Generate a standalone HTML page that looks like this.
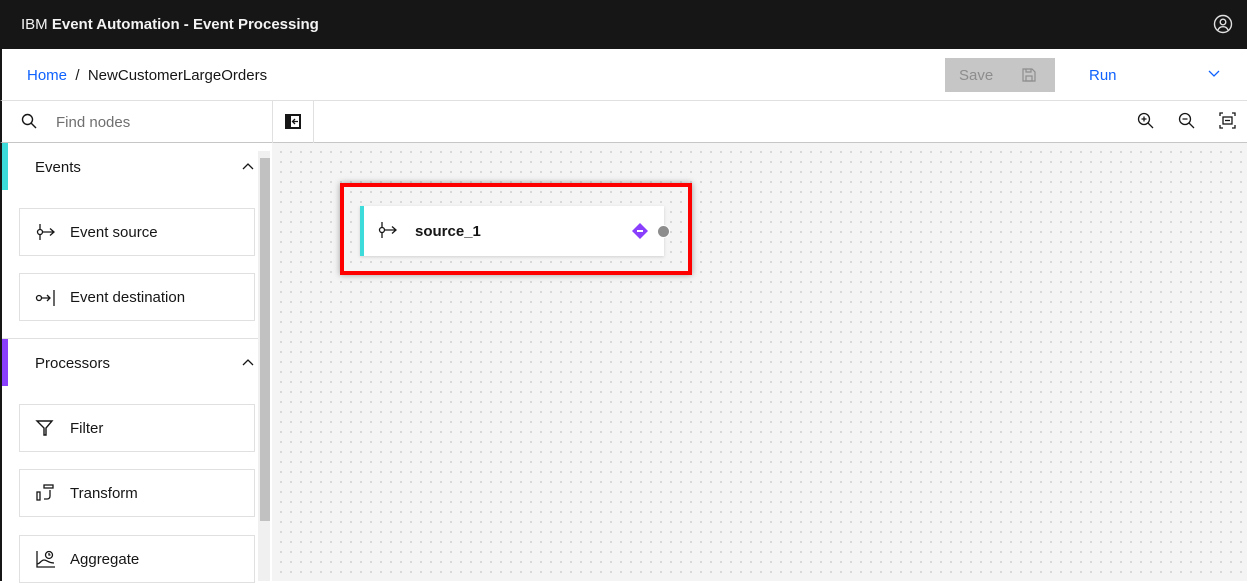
<!DOCTYPE html>
<html><head><meta charset="utf-8"><style>
*{box-sizing:border-box;margin:0;padding:0}
body{width:1247px;height:581px;overflow:hidden;font-family:"Liberation Sans",sans-serif;background:#fff;position:relative;color:#161616}
.abs{position:absolute}
.hdr{left:0;top:0;width:1247px;height:49px;background:#161616;color:#f4f4f4;font-size:15px}
.bc{left:0;top:49px;width:1247px;height:52px;background:#fff;border-bottom:1px solid #e0e0e0;border-left:2px solid #161616}
.tb{left:0;top:101px;width:1247px;height:42px;background:#fff;border-bottom:1px solid #c6c6c6;border-left:2px solid #161616}
.side{left:0;top:143px;width:272px;height:438px;background:#fff;border-left:2px solid #161616}
.canvas{left:272px;top:143px;width:975px;height:438px;background-color:#f4f4f4;background-image:radial-gradient(#d6d6d6 1px,transparent 1.2px);background-size:10px 10px;background-position:4px 4px}
.card{position:absolute;left:19px;width:236px;height:48px;border:1px solid #e0e0e0;background:#fff;font-size:15px}
.card span{position:absolute;left:50px;top:15px}
.card svg{position:absolute;left:15px;top:13px}
.sec{position:absolute;left:2px;width:256px;height:47px;font-size:15px}
.sec .t{position:absolute;left:31px;top:16px}
</style></head><body>
<div class="abs hdr"><span class="abs" style="left:21px;top:16px">IBM <b>Event Automation - Event Processing</b></span>
<svg class="abs" style="left:1213px;top:14px" width="20" height="20" viewBox="0 0 20 20" fill="none" stroke="#e0e0e0" stroke-width="1.4"><circle cx="10" cy="10" r="8.5"/><circle cx="10" cy="8" r="2.8"/><path d="M5 16c1-2.5 3-3.3 5-3.3s4 .8 5 3.3"/></svg></div>
<div class="abs bc"><span class="abs" style="left:25px;top:18px;font-size:15px"><span style="color:#0f62fe">Home</span>&nbsp; / &nbsp;NewCustomerLargeOrders</span>
<div class="abs" style="left:943px;top:9px;width:110px;height:34px;background:#c6c6c6;color:#8d8d8d;font-size:15px"><span class="abs" style="left:14px;top:9px">Save</span>
<svg class="abs" style="left:77px;top:10px" width="14" height="14" viewBox="0 0 14 14" fill="none" stroke="#8d8d8d" stroke-width="1.2"><path d="M1 1h9l3 3v9H1z"/><rect x="4" y="8" width="6" height="5"/><path d="M4 1v3h5V1"/></svg></div>
<span class="abs" style="left:1087px;top:18px;color:#0f62fe;font-size:15px">Run</span>
<svg class="abs" style="left:1206px;top:21px" width="12" height="8" viewBox="0 0 12 8" fill="none" stroke="#0f62fe" stroke-width="1.3"><path d="M1 1l5 5 5-5"/></svg></div>
<div class="abs tb">
<svg class="abs" style="left:19px;top:12px" width="16" height="16" viewBox="0 0 16 16" fill="none" stroke="#161616" stroke-width="1.4"><circle cx="6.5" cy="6.5" r="5"/><path d="M10 10l5 5"/></svg>
<span class="abs" style="left:54px;top:13px;color:#6f6f6f;font-size:15px">Find nodes</span>
<div class="abs" style="left:270px;top:0;width:1px;height:42px;background:#e0e0e0"></div>
<div class="abs" style="left:311px;top:0;width:1px;height:42px;background:#e0e0e0"></div>
<svg class="abs" style="left:283px;top:13px" width="16" height="15" viewBox="0 0 16 15"><rect x="0" y="0" width="16" height="15" fill="#161616"/><rect x="6" y="2" width="8" height="11" fill="#fff"/><path d="M13 7.5H8M10 5l-2.5 2.5L10 10" stroke="#161616" stroke-width="1.3" fill="none"/></svg>
<svg class="abs" style="left:1135px;top:11px" width="17" height="17" viewBox="0 0 17 17" fill="none" stroke="#161616" stroke-width="1.3"><circle cx="7" cy="7" r="5.5"/><path d="M11 11l5 5M4.5 7h5M7 4.5v5"/></svg>
<svg class="abs" style="left:1176px;top:11px" width="17" height="17" viewBox="0 0 17 17" fill="none" stroke="#161616" stroke-width="1.3"><circle cx="7" cy="7" r="5.5"/><path d="M11 11l5 5M4.5 7h5"/></svg>
<svg class="abs" style="left:1217px;top:11px" width="17" height="17" viewBox="0 0 17 17" fill="none" stroke="#161616" stroke-width="1.3"><path d="M1 4V1h3M13 1h3v3M16 13v3h-3M4 16H1v-3"/><rect x="4" y="5" width="9" height="7"/><path d="M6 8.5h5"/></svg>
</div>
<div class="abs side">
<div class="sec" style="top:0"><div class="abs" style="left:-2px;top:0;width:6px;height:47px;background:#3ddbd9"></div><span class="t">Events</span>
<svg class="abs" style="left:238px;top:20px" width="12" height="7" viewBox="0 0 12 7" fill="none" stroke="#161616" stroke-width="1.3"><path d="M1 6l5-5 5 5"/></svg></div>
<div class="card" style="top:65px;left:17px"><svg width="22" height="20" viewBox="0 0 22 20" fill="none" stroke="#161616" stroke-width="1.3"><path d="M5 2v5M5 13v5"/><circle cx="5" cy="10" r="2.5"/><path d="M7.5 10H19M15 6.5l4 3.5-4 3.5"/></svg><span>Event source</span></div>
<div class="card" style="top:130px;left:17px"><svg width="22" height="20" viewBox="0 0 22 20" fill="none" stroke="#161616" stroke-width="1.3"><circle cx="4" cy="11" r="2.5"/><path d="M6.5 11H15M12 8l3 3-3 3M19 3v16" /></svg><span>Event destination</span></div>
<div class="abs" style="left:0;top:195px;width:258px;height:1px;background:#e0e0e0"></div>
<div class="sec" style="top:196px"><div class="abs" style="left:-2px;top:0;width:6px;height:47px;background:#8a3ffc"></div><span class="t">Processors</span>
<svg class="abs" style="left:238px;top:20px" width="12" height="7" viewBox="0 0 12 7" fill="none" stroke="#161616" stroke-width="1.3"><path d="M1 6l5-5 5 5"/></svg></div>
<div class="card" style="top:261px;left:17px"><svg width="22" height="20" viewBox="0 0 22 20" fill="none" stroke="#161616" stroke-width="1.4"><path d="M2 3h15l-6 7v7H9v-7z"/></svg><span>Filter</span></div>
<div class="card" style="top:326px;left:17px"><svg width="22" height="20" viewBox="0 0 22 20" fill="none" stroke="#161616" stroke-width="1.3"><rect x="2" y="9" width="3" height="8"/><rect x="9" y="2" width="9" height="3"/><path d="M15 7v6c0 2-1 3-3 3H9"/></svg><span>Transform</span></div>
<div class="card" style="top:392px;left:17px"><svg width="22" height="20" viewBox="0 0 22 20" fill="none" stroke="#161616" stroke-width="1.3"><path d="M2 2v16h18M2 15c3 0 4-4 7-4s4 3 10 3"/><circle cx="14" cy="6" r="3.5"/><path d="M14 4v2h1.5"/></svg><span>Aggregate</span></div>
<div class="abs" style="left:256px;top:8px;width:12px;height:430px;background:#f0f0f0"></div>
<div class="abs" style="left:258px;top:15px;width:10px;height:363px;background:#c1c1c1"></div>
</div>
<div class="abs canvas"></div>
<div class="abs" style="left:340px;top:183px;width:352px;height:92px;border:4px solid #f00;box-shadow:0 0 6px rgba(0,0,0,.35)"></div>
<div class="abs" style="left:360px;top:206px;width:304px;height:50px;background:#fff;border-left:4px solid #3ddbd9;box-shadow:0 1px 3px rgba(0,0,0,.15)">
<svg class="abs" style="left:13px;top:14px" width="22" height="20" viewBox="0 0 22 20" fill="none" stroke="#161616" stroke-width="1.3"><path d="M5 2v5M5 13v5"/><circle cx="5" cy="10" r="2.5"/><path d="M7.5 10H19M15 6.5l4 3.5-4 3.5"/></svg>
<b class="abs" style="left:51px;top:17px;font-size:15px">source_1</b>
<svg class="abs" style="left:268px;top:17px" width="16" height="16" viewBox="0 0 16 16"><path d="M8 0l8 8-8 8-8-8z" fill="#8a3ffc"/><path d="M5 8h6" stroke="#fff" stroke-width="2"/></svg>
</div>
<div class="abs" style="left:657px;top:225px;width:13px;height:13px;border-radius:50%;background:#8d8d8d;border:1px solid #fff"></div>
</body></html>
